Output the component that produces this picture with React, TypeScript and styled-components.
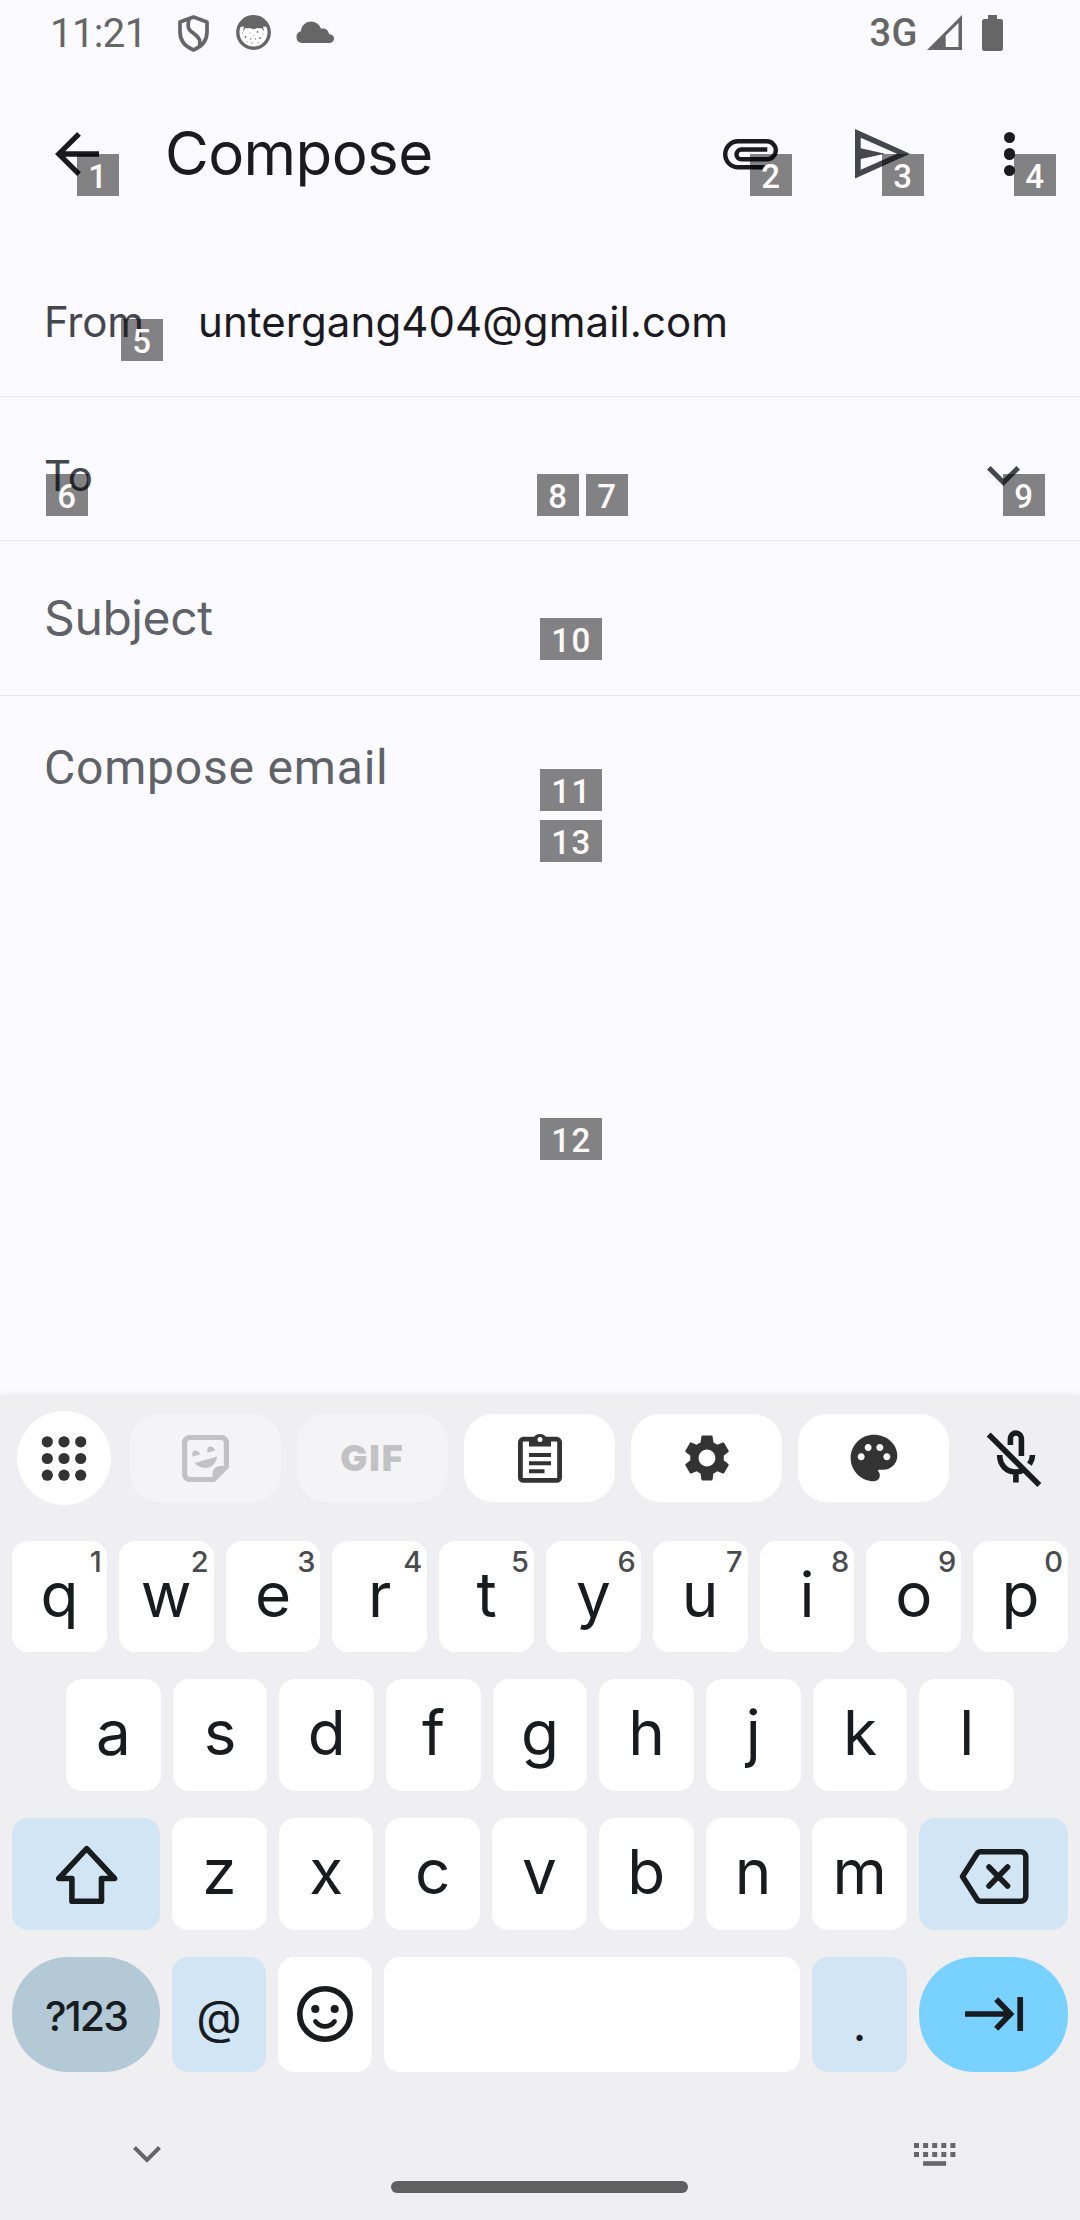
import React from 'react';
import styled, { createGlobalStyle, css } from 'styled-components';
import { MdPalette, MdSettings } from 'react-icons/md';

const sans = `Inter, Roboto, "Liberation Sans", sans-serif`;
const roboto = `Roboto, "Liberation Sans", sans-serif`;

const GlobalStyle = createGlobalStyle`
  * { box-sizing: border-box; }
  body { margin: 0; background: #fafaff; }
  svg { display: block; flex: none; overflow: visible; }
`;

const Screen = styled.div`
  position: relative;
  display: flex;
  flex-direction: column;
  width: 1080px;
  height: 2220px;
  overflow: hidden;
  background: #fafaff;
  font-family: ${sans};
  color: #1b1b1f;
`;

const StatusBar = styled.header`
  display: flex;
  justify-content: space-between;
  align-items: flex-start;
  height: 66px;
  padding: 15px 77px 0 50px;
  color: #666;
`;

const StatusGroup = styled.div<{ $gap: number }>`
  display: flex;
  align-items: flex-start;
  gap: ${(p) => p.$gap}px;
`;

const Clock = styled.span`
  width: 104px;
  font: 400 40px/38px ${roboto};
  letter-spacing: -0.6px;
`;

const Network = styled.span`
  font: 500 38px/36px ${roboto};
  letter-spacing: 0.5px;
`;

const AppBar = styled.div`
  display: flex;
  align-items: center;
  height: 176px;
  padding: 0 65px 0 55px;
`;

const Title = styled.h1`
  flex: 1;
  margin: -3px 0 0 66px;
  font: 400 60px/72px ${sans};
  letter-spacing: -0.6px;
`;

const Actions = styled.div`
  display: flex;
  align-items: center;
  gap: 77px;
`;

const More = styled.div`
  display: flex;
  flex-direction: column;
  gap: 5px;
  margin-left: 17px;
`;

const MoreDot = styled.i`
  width: 11.5px;
  height: 11.5px;
  border-radius: 50%;
  background: #1b1b1f;
`;

const FieldRow = styled.div<{ $height: number; $shift?: number }>`
  display: flex;
  align-items: center;
  height: ${(p) => p.$height}px;
  padding: ${(p) => p.$shift ?? 0}px 60px 0 44px;
  border-bottom: 1px solid #e6e6eb;
`;

const FieldLabel = styled.span`
  width: 154px;
  font-size: 42px;
  line-height: 52px;
  letter-spacing: -0.2px;
  color: #44474e;
`;

const FieldValue = styled.span`
  flex: 1;
  font-size: 42px;
  line-height: 52px;
  letter-spacing: 0.08px;
`;

const Placeholder = styled.span<{ $roboto?: boolean }>`
  font-family: ${(p) => (p.$roboto ? roboto : sans)};
  font-size: 48px;
  line-height: 56px;
  letter-spacing: ${(p) => (p.$roboto ? 0.8 : -0.4)}px;
  color: #5f6368;
`;

const Body = styled.main`
  flex: 1;
  padding: 44px 44px 0;
`;

const Keyboard = styled.section`
  display: flex;
  flex-direction: column;
  height: 825px;
  padding-top: 16px;
  background: #efeff1;
  box-shadow: 0 0 6px rgba(120, 120, 135, 0.14);
`;

const Toolbar = styled.div`
  display: flex;
  align-items: center;
  height: 94px;
  margin-bottom: 36px;
  padding: 0 39px 0 17px;
`;

const AppsButton = styled.button`
  display: grid;
  place-items: center;
  width: 94px;
  height: 94px;
  margin-right: 19px;
  padding: 0;
  border: 0;
  border-radius: 50%;
  background: #fff;
`;

const Tools = styled.div`
  display: flex;
  flex: 1;
  gap: 16px;
`;

const Tool = styled.button<{ $off?: boolean }>`
  display: grid;
  place-items: center;
  width: 151px;
  height: 88px;
  padding: 0;
  border: 0;
  border-radius: 29px;
  background: ${(p) => (p.$off ? '#f4f4f6' : '#fff')};
  color: ${(p) => (p.$off ? '#c2c2c4' : '#333')};
`;

const GifLabel = styled.span`
  font: 900 36px/36px ${sans};
  letter-spacing: 2px;
`;

const KeyRow = styled.div<{ $inset?: number; $height?: number; $after?: number }>`
  display: flex;
  gap: 12px;
  height: ${(p) => p.$height ?? 112}px;
  margin-bottom: ${(p) => p.$after ?? 27}px;
  padding: 0 ${(p) => p.$inset ?? 12}px;
`;

type Tone = 'plain' | 'tint' | 'slate' | 'accent';
const toneColor: Record<Tone, string> = {
  plain: '#fff',
  tint: '#d2e5f4',
  slate: '#b4c9d6',
  accent: '#78d1ff',
};

const Key = styled.button<{ $tone?: Tone; $width?: number; $round?: boolean; $size?: number }>`
  position: relative;
  display: flex;
  align-items: center;
  justify-content: center;
  ${(p) =>
    p.$width
      ? css`
          flex: none;
          width: ${p.$width}px;
        `
      : css`
          flex: 1 1 0;
        `}
  min-width: 0;
  padding: 0;
  border: 0;
  border-radius: ${(p) => (p.$round ? 56 : 16)}px;
  background: ${(p) => toneColor[p.$tone ?? 'plain']};
  color: #191c1e;
  font: 400 ${(p) => p.$size ?? 62}px/74px ${sans};
`;

const Letter = styled.span`
  margin-top: -4px;
`;

const Symbol = styled.span<{ $top: number; $weight?: number; $tight?: boolean }>`
  margin-top: ${(p) => p.$top}px;
  font-weight: ${(p) => p.$weight ?? 400};
  letter-spacing: ${(p) => (p.$tight ? -1.9 : 0)}px;
`;

const Hint = styled.span`
  position: absolute;
  top: 4px;
  right: 5px;
  font: 500 29px/34px ${sans};
  color: #4a4b4e;
`;

const NavBar = styled.footer`
  display: grid;
  grid-template-columns: 259px 297px 1fr;
  align-items: start;
  padding: 0 124px 0 132px;
`;

const HomeBar = styled.div`
  height: 12px;
  margin-top: 38px;
  border-radius: 6px;
  background: #606060;
`;

const NavIcon = styled.div<{ $end?: boolean }>`
  display: flex;
  justify-content: ${(p) => (p.$end ? 'flex-end' : 'flex-start')};
  padding: ${(p) => (p.$end ? '0' : '3px 0 0 1px')};
`;

const Tag = styled.span<{ $x: number; $y: number; $wide?: boolean }>`
  position: absolute;
  left: ${(p) => p.$x}px;
  top: ${(p) => p.$y}px;
  width: ${(p) => (p.$wide ? 62 : 42)}px;
  height: 42px;
  padding-left: 1px;
  background: rgba(0, 0, 0, 0.48);
  color: #fffafa;
  font: 500 33px/45px ${roboto};
  letter-spacing: 1.5px;
  text-align: center;
`;

const tags: [number, number, number][] = [
  [1, 77, 154], [2, 750, 154], [3, 882, 154], [4, 1014, 154],
  [5, 121, 319], [6, 46, 474], [8, 537, 474], [7, 586, 474],
  [9, 1003, 474], [10, 540, 618], [11, 540, 769], [13, 540, 820], [12, 540, 1118],
];

const Shield = () => (
  <svg width="31" height="37" viewBox="0 0 31 37" fill="none" stroke="#666" strokeWidth="3.7">
    <path d="M15.5 2 29 7v10c0 9-6 15-13.500 18C8 32 2 26 2 17V7Z" strokeLinejoin="round" />
    <path d="M11 4C8.500 15 12 15.500 17 19.500c5 4 5.500 6 4.500 12" />
  </svg>
);

const Face = () => (
  <svg width="35" height="35" viewBox="0 0 35 35">
    <circle cx="17.500" cy="17.500" r="15.700" fill="#fff" stroke="#666" strokeWidth="3.400" />
    <path d="M3.500 12C6 4 12 2 17.500 2S29 4 31.500 12l-4.500-.5 1 5-2.500-3.500c-2 1-3.500-.5-4.500 0-2 1.500-5 1.500-7 0-1-.5-2.500 1-4.500 0L7 16.500l1-5Z" fill="#666" />
    <g fill="#777">
      <circle cx="9.500" cy="22" r="1" /><circle cx="14" cy="18" r=".6" /><circle cx="14.500" cy="24" r=".8" />
      <circle cx="21.500" cy="17" r=".9" /><circle cx="19.500" cy="24" r=".7" /><circle cx="24" cy="23" r=".9" />
      <circle cx="16" cy="28" r=".7" /><circle cx="22" cy="27.500" r=".6" /><circle cx="27" cy="19" r=".6" />
      <circle cx="6.500" cy="18" r=".6" /><circle cx="11" cy="26.500" r=".5" /><circle cx="18" cy="20.500" r=".5" />
    </g>
  </svg>
);

const Cloud = () => (
  <svg width="38" height="29" viewBox="2 0 38 29" fill="#666">
    <path d="M6 28a6 6 0 0 1-1-11.800C5 11 9.500 6.500 15 6.500c4.500 0 8.500 3 10 7.200 4-.8 7.500 1.300 8 5.300 3 .5 5 2 5 4.500S36 28 33 28Z" />
  </svg>
);

const Signal = () => (
  <svg width="35" height="35" viewBox="0 0 35 35" fill="#666">
    <path fillRule="evenodd" d="M0 35 35 0v35Zm18.700-3h12.800V8L18.700 20.500Z" />
  </svg>
);

const Battery = () => (
  <svg width="21" height="36" viewBox="0 0 21 36" fill="#666">
    <path d="M6 0h9v4h3.500A2.500 2.500 0 0 1 21 6.500v27a2.500 2.500 0 0 1-2.500 2.500h-16A2.500 2.500 0 0 1 0 33.500v-27A2.500 2.500 0 0 1 2.500 4H6Z" />
  </svg>
);

const Back = () => (
  <svg width="44" height="44" viewBox="0 0 44 44" fill="none" stroke="#1b1b1f" strokeWidth="5.300">
    <path d="M44 22H5M24 1.800 3.800 22 24 42.200" />
  </svg>
);

const Clip = () => (
  <svg width="55" height="31" viewBox="0 0 55 31" fill="none" stroke="#1b1b1f" strokeWidth="4.400">
    <path d="M42 28.300H15.200a13 13 0 0 1 0-26h28.600a9 9 0 0 1 0 18H18.400a4.900 4.900 0 0 1 0-9.800h25.900" />
  </svg>
);

const Send = () => (
  <svg width="55" height="50" viewBox="0 0 55 50" fill="#44474e">
    <path fillRule="evenodd" d="M0 0 55 24.700 0 49.500ZM5.700 8.700v10.600L30 24.700 5.700 30v10.700L42 24.700Z" />
  </svg>
);

const Expand = () => (
  <svg width="33" height="20" viewBox="0 0 33 20" fill="none" stroke="#44474e" strokeWidth="5">
    <path d="M1.800 1.800 16.500 16.500 31.200 1.800" />
  </svg>
);

const Apps = () => (
  <svg width="45" height="45" viewBox="0.500 0 45 45" fill="#333">
    {[5.8, 22.500, 39.200].map((y) => [5.8, 22.500, 39.200].map((x) => <circle key={`${x}-${y}`} cx={x} cy={y} r="5.600" />))}
  </svg>
);

const Sticker = () => (
  <svg width="47" height="47" viewBox="0 0 47 47" fill="#c2c2c4">
    <path fillRule="evenodd" d="M7.500 0h32A7.500 7.500 0 0 1 47 7.500v25.200L32.700 47H7.500A7.500 7.500 0 0 1 0 39.500v-32A7.500 7.500 0 0 1 7.500 0Zm.7 5A3 3 0 0 0 5.200 8v31a3 3 0 0 0 3 3h22.400v-3.500c0-4.500 3.500-7.500 8-7.500h3.200V8a3 3 0 0 0-3-3Z" />
    <path d="M10.500 21.500c-1.500-8 6-7.500 7.700-2ZM25.500 17.500c-1.500-8 6-7.500 7.700-2ZM12.700 28 35 21.500c0 5-4 10-9.500 11.200-5.500 1-10-1-12.800-4.700Z" />
  </svg>
);

const Clipboard = () => (
  <svg width="44" height="51" viewBox="0 1 44 51" fill="none" stroke="#333">
    <rect x="2.400" y="7.200" width="39.200" height="41.200" rx="3" strokeWidth="4.800" />
    <path d="M11 14.500V6h4.500a7 6.500 0 0 1 13 0H33v8.500Z" fill="#333" stroke="none" />
    <circle cx="22" cy="7.500" r="2.500" fill="#fff" stroke="none" />
    <path d="M11 23h22M11 31.200h22M11 39.300h15.500" strokeWidth="4" />
  </svg>
);

const MicOff = () => (
  <svg width="54" height="57" viewBox="0 0 54 57" fill="none" stroke="#191c1e" strokeWidth="5.600">
    <path d="M1.700 4.500 52.300 55" />
    <path d="M23.400 15V8.500a5.500 5.500 0 0 1 11 0V26M12.700 25c0 10.500 7 17 16.200 17 3.500 0 6-.8 8.500-2.300M45.500 25c0 3.500-1.200 6.500-3 9.200M28.900 42v10.500" />
  </svg>
);

const Shift = () => (
  <svg width="61" height="59" viewBox="0 0 61 59" fill="none" stroke="#191c1e" strokeWidth="5.600" strokeLinejoin="round">
    <path d="M30.700 3.600 2.800 33.500H15.900v22.700h29.600V33.500h13.100Z" />
  </svg>
);

const Backspace = () => (
  <svg width="70" height="55" viewBox="0 -2 70 55" fill="none" stroke="#191c1e" strokeWidth="5.500" strokeLinejoin="round">
    <path d="M3.500 27.500 17.800 5a4.500 4.500 0 0 1 3.800-2.200H62a4.800 4.800 0 0 1 4.800 4.800v39.800a4.800 4.800 0 0 1-4.800 4.800H21.600a4.500 4.500 0 0 1-3.800-2.200Z" />
    <path d="m30 18 18.600 19M48.600 18 30 37" strokeLinecap="round" />
  </svg>
);

const Smile = () => (
  <svg width="56" height="56" viewBox="0 1 56 56" fill="none" stroke="#191c1e" strokeWidth="5.600">
    <circle cx="28" cy="28" r="25.200" />
    <circle cx="18.300" cy="23" r="4.100" fill="#191c1e" stroke="none" />
    <circle cx="37.700" cy="23" r="4.100" fill="#191c1e" stroke="none" />
    <path d="M18.500 35.500c5 6.500 14 6.500 19 0" strokeWidth="4.800" strokeLinecap="round" />
  </svg>
);

const Tab = () => (
  <svg width="58" height="34" viewBox="0 1 58 34" fill="none" stroke="#191c1e" strokeWidth="5.700">
    <path d="M0 17h45M31.200 2.200 45.500 17 31.200 31.800M55.200 0v34" />
  </svg>
);

const HideKeyboard = () => (
  <svg width="28" height="17" viewBox="0 0 28 17" fill="none" stroke="#666" strokeWidth="4">
    <path d="M1.500 1.500 14 14 26.500 1.500" />
  </svg>
);

const SwitchKeyboard = () => (
  <svg width="42" height="23" viewBox="0 0 42 23" fill="#666">
    {[0, 9].map((y) => [0, 9.1, 18.2, 27.3, 36.4].map((x) => <rect key={`${x}-${y}`} x={x} y={y} width="5" height="5" />))}
    <rect x="9.100" y="18.200" width="23" height="4.600" />
  </svg>
);

const Letters = ({ chars }: { chars: string }) => (
  <>
    {chars.split('').map((c) => (
      <Key key={c}>
        <Letter>{c}</Letter>
      </Key>
    ))}
  </>
);

export default function App() {
  return (
    <Screen>
      <GlobalStyle />
      <StatusBar>
        <StatusGroup $gap={24}>
          <Clock>11:21</Clock>
          <StatusGroup $gap={27}>
            <Shield />
            <Face />
            <Cloud />
          </StatusGroup>
        </StatusGroup>
        <StatusGroup $gap={9}>
          <Network>3G</Network>
          <StatusGroup $gap={20}>
            <Signal />
            <Battery />
          </StatusGroup>
        </StatusGroup>
      </StatusBar>

      <AppBar>
        <Back />
        <Title>Compose</Title>
        <Actions>
          <Clip />
          <Send />
          <More>
            <MoreDot />
            <MoreDot />
            <MoreDot />
          </More>
        </Actions>
      </AppBar>

      <FieldRow $height={155} $shift={5}>
        <FieldLabel>From</FieldLabel>
        <FieldValue>untergang404@gmail.com</FieldValue>
      </FieldRow>
      <FieldRow $height={144} $shift={14}>
        <FieldLabel>To</FieldLabel>
        <FieldValue />
        <Expand />
      </FieldRow>
      <FieldRow $height={155}>
        <Placeholder>Subject</Placeholder>
      </FieldRow>
      <Body>
        <Placeholder $roboto>Compose email</Placeholder>
      </Body>

      <Keyboard>
        <Toolbar>
          <AppsButton><Apps /></AppsButton>
          <Tools>
            <Tool $off><Sticker /></Tool>
            <Tool $off><GifLabel>GIF</GifLabel></Tool>
            <Tool><Clipboard /></Tool>
            <Tool><MdSettings size={56} /></Tool>
            <Tool><MdPalette size={56} /></Tool>
          </Tools>
          <MicOff />
        </Toolbar>

        <KeyRow $height={111}>
          {'qwertyuiop'.split('').map((c, i) => (
            <Key key={c}>
              <Letter>{c}</Letter>
              <Hint>{(i + 1) % 10}</Hint>
            </Key>
          ))}
        </KeyRow>
        <KeyRow $inset={66}>
          <Letters chars="asdfghjkl" />
        </KeyRow>
        <KeyRow>
          <Key $tone="tint" $width={148}><Shift /></Key>
          <Letters chars="zxcvbnm" />
          <Key $tone="tint" $width={149}><Backspace /></Key>
        </KeyRow>
        <KeyRow $height={115} $after={71}>
          <Key $tone="slate" $width={148} $round $size={41}><Symbol $top={3} $weight={500} $tight>?123</Symbol></Key>
          <Key $tone="tint" $width={94} $size={47}><Symbol $top={4}>@</Symbol></Key>
          <Key $width={94}><Smile /></Key>
          <Key aria-label="space" />
          <Key $tone="tint" $width={95} $size={47}><Symbol $top={18}>.</Symbol></Key>
          <Key $tone="accent" $width={149} $round><Tab /></Key>
        </KeyRow>

        <NavBar>
          <NavIcon><HideKeyboard /></NavIcon>
          <HomeBar />
          <NavIcon $end><SwitchKeyboard /></NavIcon>
        </NavBar>
      </Keyboard>

      {tags.map(([n, x, y]) => (
        <Tag key={n} $x={x} $y={y} $wide={n > 9}>{n}</Tag>
      ))}
    </Screen>
  );
}
